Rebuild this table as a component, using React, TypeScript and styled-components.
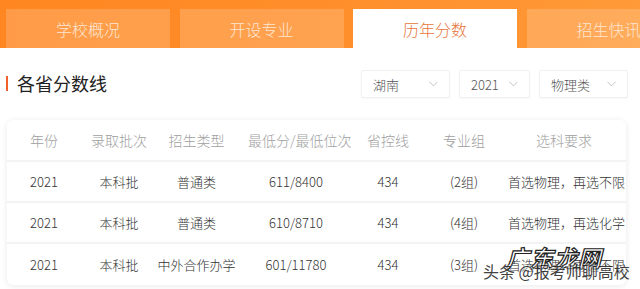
import React from 'react';
import styled, { createGlobalStyle } from 'styled-components';

const GlobalStyle = createGlobalStyle`
  html, body {
    margin: 0;
    padding: 0;
    background: #ffffff;
  }
  body {
    font-family: "Noto Sans CJK SC", "Noto Sans", sans-serif;
    font-weight: 300;
    color: #333;
  }
`;

const Page = styled.div`
  position: relative;
  width: 640px;
  height: 289px;
  overflow: hidden;
  background: #fff;
`;

const TabBar = styled.div`
  display: flex;
  align-items: flex-end;
  gap: 9.5px;
  height: 48px;
  padding: 0 0 0 6px;
  box-sizing: border-box;
  background: linear-gradient(90deg, #ff8620 0%, #ff8e2a 50%, #ff9a38 100%);
`;

interface TabProps {
  active?: boolean;
}

const Tab = styled.div<TabProps>`
  flex: 0 0 164px;
  height: 39px;
  display: flex;
  align-items: center;
  justify-content: center;
  font-size: 16px;
  line-height: 1;
  background: ${props => props.active ? '#ffffff' : 'rgba(255, 255, 255, 0.18)'};
  color: ${props => props.active ? '#e8743a' : '#fde6d2'};
`;

const TitleRow = styled.div`
  display: flex;
  align-items: center;
  justify-content: space-between;
  height: 72px;
  padding: 0 12px 0 6px;
  box-sizing: border-box;
`;

const Title = styled.div`
  display: flex;
  align-items: center;
  gap: 9px;
  font-size: 18px;
  font-weight: 400;
  line-height: 1;
  color: #222;
  margin-top: -2px;
`;

const TitleMark = styled.span`
  width: 2px;
  height: 15px;
  background: #f0602a;
`;

const Filters = styled.div`
  display: flex;
  gap: 9px;
`;

interface SelectProps {
  width: number;
}

const Select = styled.div<SelectProps>`
  width: ${props => props.width}px;
  height: 28px;
  box-sizing: border-box;
  display: flex;
  align-items: center;
  justify-content: space-between;
  padding: 0 11px;
  border: 1px solid #f0f0f0;
  border-radius: 2px;
  font-size: 13px;
  line-height: 1;
  color: #555;
  background: #fff;
  box-shadow: 0 1px 2px rgba(0, 0, 0, 0.03);
`;

const Chevron = styled.svg`
  width: 9px;
  height: 6px;
  flex: none;
`;

const Card = styled.div`
  margin: 0 14px 0 7px;
  border-radius: 6px;
  background: #fff;
  box-shadow: 0 1px 6px rgba(0, 0, 0, 0.09);
  overflow: hidden;
`;

const cols = '74px 76px 89px 96px 84px 88px 1fr';

interface RowProps {
  head?: boolean;
  last?: boolean;
}

const Row = styled.div<RowProps>`
  display: grid;
  grid-template-columns: ${cols};
  height: ${props => props.head ? 42 : 41}px;
  align-items: center;
  border-bottom: ${props => props.last ? 'none' : '2px solid #f3f3f3'};
  box-sizing: border-box;
  font-size: ${props => props.head ? 14 : 13}px;
  color: ${props => props.head ? '#a0a0a0' : '#333'};
`;

interface CellProps {
  shift?: number;
}

const Cell = styled.div<CellProps>`
  text-align: center;
  white-space: nowrap;
  line-height: 1;
  transform: translateX(${props => props.shift || 0}px);
`;

const WaterMark = styled.div`
  position: absolute;
  left: 483px;
  top: 263px;
  font-size: 16px;
  font-weight: 400;
  line-height: 1;
  color: #222;
  white-space: nowrap;
  text-shadow: 0 0 2px #fff, 0 0 2px #fff;
  opacity: 0.85;
`;

const Logo = styled.div`
  position: absolute;
  left: 506px;
  top: 246px;
  font-size: 23px;
  font-weight: 700;
  font-style: italic;
  line-height: 1;
  color: #fff;
  letter-spacing: 1px;
  -webkit-text-stroke: 1.2px #222;
  white-space: nowrap;
`;

const shifts = [0, 0, -5, 2, 4, -6, -6];

const header = ['年份', '录取批次', '招生类型', '最低分/最低位次', '省控线', '专业组', '选科要求'];

const rows = [
  ['2021', '本科批', '普通类', '611/8400', '434', '(2组)', '首选物理，再选不限'],
  ['2021', '本科批', '普通类', '610/8710', '434', '(4组)', '首选物理，再选化学'],
  ['2021', '本科批', '中外合作办学', '601/11780', '434', '(3组)', '首选物理，再选不限'],
];

const filters = [
  { label: '湖南', width: 89 },
  { label: '2021', width: 71 },
  { label: '物理类', width: 89 },
];

const tabs = ['学校概况', '开设专业', '历年分数', '招生快讯'];

const App = () => {
  return (
    <Page>
      <GlobalStyle />
      <TabBar>
        {tabs.map((t, i) => (
          <Tab key={t} active={i === 2}>{t}</Tab>
        ))}
      </TabBar>
      <TitleRow>
        <Title>
          <TitleMark />
          各省分数线
        </Title>
        <Filters>
          {filters.map(f => (
            <Select key={f.label} width={f.width}>
              {f.label}
              <Chevron viewBox="0 0 9 6">
                <path d="M0.5 0.8 L4.5 5 L8.5 0.8" fill="none" stroke="#c4c4c4" strokeWidth="1" />
              </Chevron>
            </Select>
          ))}
        </Filters>
      </TitleRow>
      <Card>
        <Row head>
          {header.map((h, i) => (
            <Cell key={h} shift={shifts[i]}>{h}</Cell>
          ))}
        </Row>
        {rows.map((r, ri) => (
          <Row key={ri} last={ri === rows.length - 1}>
            {r.map((c, i) => (
              <Cell key={i} shift={shifts[i]}>{c}</Cell>
            ))}
          </Row>
        ))}
      </Card>
      <Logo>广东龙网</Logo>
      <WaterMark>头条 @报考帅聊高校</WaterMark>
    </Page>
  );
};

export default App;
